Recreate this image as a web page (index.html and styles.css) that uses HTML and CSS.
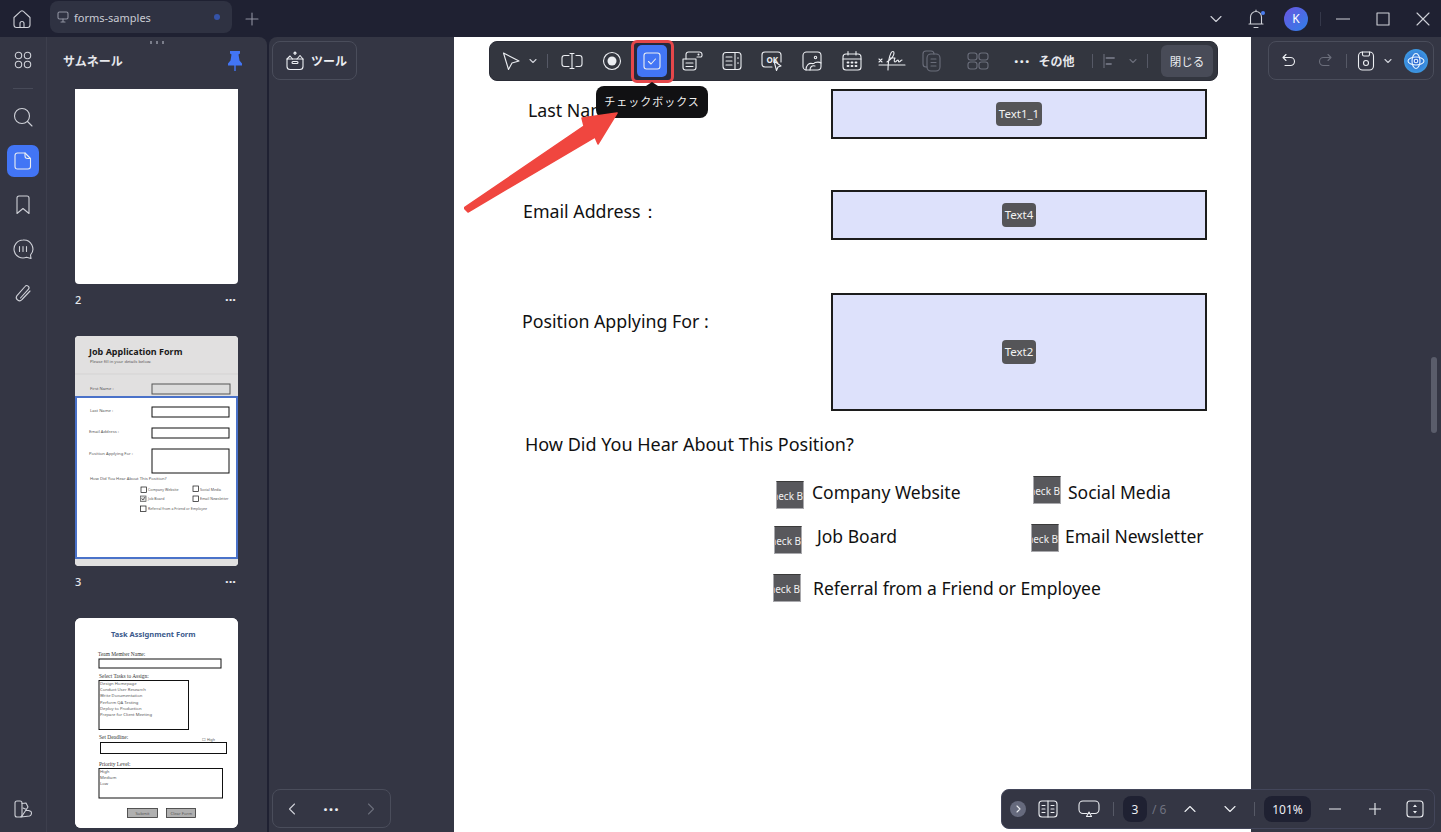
FILE: index.html
```html
<!DOCTYPE html>
<html lang="ja">
<head>
    <meta charset="UTF-8">
    <meta name="viewport" content="width=device-width, initial-scale=1.0">
    <title>forms-samples</title>
    <link rel="stylesheet" href="styles.css">
</head>
<body>
    <!-- Title bar -->
    <header class="titlebar">
        <div class="home-btn">
            <svg class="icon" width="20" height="20" viewBox="0 0 20 20"><path d="M2 8.5 8.6 2.4a2 2 0 0 1 2.8 0L18 8.5v7.5a2.5 2.5 0 0 1-2.5 2.5h-11A2.5 2.5 0 0 1 2 16Z"/><path d="M8 18.5v-4a2 2 0 0 1 4 0v4"/></svg>
        </div>
        <div class="tab">
            <svg class="icon dim" width="12" height="12" viewBox="0 0 12 12"><rect x="1" y="1" width="10" height="7" rx="1.5"/><path d="M6 8v2.5M4 11h4"/></svg>
            <span class="tab-name">forms-samples</span>
            <span class="tab-dot"></span>
        </div>
        <div class="tab-add">
            <svg class="icon dim" width="14" height="14" viewBox="0 0 14 14"><path d="M7 1v12M1 7h12"/></svg>
        </div>
        <div class="titlebar-right">
            <svg class="icon" width="12" height="12" viewBox="0 0 12 12"><path d="M1 3.5 6 8.5l5-5"/></svg>
            <div class="bell">
                <svg class="icon" width="18" height="20" viewBox="0 0 18 20"><path d="M2 15h14M3.5 15V8a5.5 5.5 0 0 1 11 0v7M7 18.5h4M9 1v1.5"/></svg>
                <span class="bell-dot"></span>
            </div>
            <div class="avatar">K</div>
            <span class="title-sep"></span>
            <div class="win-btn"><svg class="icon" width="14" height="14" viewBox="0 0 14 14"><path d="M0 7h14"/></svg></div>
            <div class="win-btn"><svg class="icon" width="14" height="14" viewBox="0 0 14 14"><rect x="1" y="1" width="12" height="12"/></svg></div>
            <div class="win-btn"><svg class="icon" width="14" height="14" viewBox="0 0 14 14"><path d="M1 1l12 12M13 1 1 13"/></svg></div>
        </div>
    </header>

    <main class="main">
        <!-- Left panel -->
        <aside class="left-panel">
            <nav class="rail">
                <div class="rail-item">
                    <svg class="icon" width="20" height="20" viewBox="0 0 20 20"><circle cx="5.5" cy="5.5" r="3.2"/><circle cx="14.5" cy="5.5" r="3.2"/><circle cx="5.5" cy="14.5" r="3.2"/><circle cx="14.5" cy="14.5" r="3.2"/></svg>
                </div>
                <span class="rail-sep"></span>
                <div class="rail-item">
                    <svg class="icon" width="20" height="20" viewBox="0 0 20 20"><circle cx="9" cy="9" r="7.5"/><path d="M14.5 14.5 19 19"/></svg>
                </div>
                <div class="rail-item">
                    <span class="rail-active">
                        <svg class="icon bright" width="18" height="20" viewBox="0 0 18 20"><path d="M3.5 2H11l5.5 5.5V15.5a2.5 2.5 0 0 1-2.5 2.5H3.5A2.5 2.5 0 0 1 1 15.5v-11A2.5 2.5 0 0 1 3.5 2Z"/><path d="M11 2v3a2.5 2.5 0 0 0 2.5 2.5h3"/></svg>
                    </span>
                </div>
                <div class="rail-item">
                    <svg class="icon" width="16" height="20" viewBox="0 0 16 20"><path d="M2 3a2 2 0 0 1 2-2h8a2 2 0 0 1 2 2v15.5l-6-5-6 5Z"/></svg>
                </div>
                <div class="rail-item">
                    <svg class="icon" width="22" height="22" viewBox="0 0 22 22"><path d="M11 2a9 9 0 1 0 3.5 17.3L19 20.5l-.5-3.5A9 9 0 0 0 11 2Z"/><path d="M7.5 8.5v5M11 8.5v5M14.5 8.5v5"/></svg>
                </div>
                <div class="rail-item">
                    <svg class="icon" width="20" height="20" viewBox="0 0 20 20"><path d="M17 8 9 16.5a3.2 3.2 0 0 1-5.2-3.7L12 3.5a2.2 2.2 0 0 1 3.5 2.7L7.5 15"/></svg>
                </div>
                <div class="rail-item rail-bottom">
                    <svg class="icon" width="20" height="20" viewBox="0 0 20 20"><rect x="2" y="2" width="7" height="16" rx="2"/><path d="M9 4.5 13 4l2 4-6 9M10 9l8 3.5a3 3 0 0 1-1.5 4.5L8 18"/></svg>
                </div>
            </nav>
            <section class="thumbs">
                <div class="grip"><i></i><i></i><i></i></div>
                <div class="thumbs-head">
                    <h2>サムネール</h2>
                    <svg width="16" height="20" viewBox="0 0 16 20"><path class="pin" d="M3 0h10v2.5l-1.500 1 1 6 2.500 3v2H8.700V20H7.300v-5.500H1v-2l2.500-3 1-6-1.500-1Z"/></svg>
                </div>
                <div class="thumb-list">
                    <div class="thumb thumb-blank"></div>
                    <div class="thumb-foot"><span>2</span><span class="dots">···</span></div>

                    <svg class="thumb thumb-job" viewBox="0 0 163 230">
                        <rect width="163" height="230" fill="#e1e0e0"/>
                        <path d="M0 38h163" stroke="#d4d3d3"/>
                        <text x="14" y="19" class="t-title">Job Application Form</text>
                        <text x="15" y="27" class="t-small">Please fill in your details below.</text>
                        <text x="15" y="54" class="t-small">First Name :</text>
                        <rect x="77" y="48" width="78" height="10" class="t-box grey"/>
                        <rect x="1" y="61" width="161" height="161" class="t-view"/>
                        <text x="15" y="76" class="t-small">Last Name :</text>
                        <rect x="77" y="71" width="77" height="10" class="t-box"/>
                        <text x="14" y="97" class="t-small">Email Address :</text>
                        <rect x="77" y="92" width="77" height="10" class="t-box"/>
                        <text x="14" y="119" class="t-small">Position Applying For :</text>
                        <rect x="77" y="113" width="77" height="24" class="t-box"/>
                        <text x="15" y="144" class="t-small">How Did You Hear About This Position?</text>
                        <rect x="66" y="151" width="5.5" height="5.5" class="t-box thin"/>
                        <text x="73" y="155" class="t-tiny">Company Website</text>
                        <rect x="118" y="150" width="5.5" height="5.5" class="t-box thin"/>
                        <text x="125" y="155" class="t-tiny">Social Media</text>
                        <rect x="65.5" y="160" width="5.5" height="5.5" class="t-box thin grey"/>
                        <path d="M66.5 162.5l1.5 1.5 2-3" stroke="#333" stroke-width=".7" fill="none"/>
                        <text x="73" y="164" class="t-tiny">Job Board</text>
                        <rect x="118" y="160" width="5.5" height="5.5" class="t-box thin"/>
                        <text x="125" y="164" class="t-tiny">Email Newsletter</text>
                        <rect x="65.5" y="170" width="5.5" height="5.5" class="t-box thin"/>
                        <text x="73" y="174" class="t-tiny">Referral from a Friend or Employee</text>
                    </svg>
                    <div class="thumb-foot"><span>3</span><span class="dots">···</span></div>

                    <svg class="thumb thumb-task" viewBox="0 0 163 210">
                        <rect width="163" height="210" fill="#fff"/>
                        <text x="36" y="19" class="t-blue">Task Assignment Form</text>
                        <text x="23" y="38" class="t-serif">Team Member Name:</text>
                        <rect x="24" y="41" width="122" height="9" class="t-box"/>
                        <text x="24" y="60" class="t-serif">Select Tasks to Assign:</text>
                        <rect x="24" y="62.5" width="89.5" height="49" class="t-box"/>
                        <text x="25" y="67" class="t-small">Design Homepage</text>
                        <text x="25" y="73" class="t-small">Conduct User Research</text>
                        <text x="25" y="79" class="t-small">Write Documentation</text>
                        <text x="25" y="85.5" class="t-small">Perform QA Testing</text>
                        <text x="25" y="91.5" class="t-small">Deploy to Production</text>
                        <text x="25" y="97.5" class="t-small">Prepare for Client Meeting</text>
                        <text x="24" y="121" class="t-serif">Set Deadline:</text>
                        <text x="127" y="122.5" class="t-tiny">☐ High</text>
                        <rect x="25.5" y="124.5" width="126" height="11" class="t-box"/>
                        <text x="24" y="148" class="t-serif">Priority Level:</text>
                        <rect x="24" y="150.5" width="123.5" height="29.5" class="t-box"/>
                        <text x="25" y="155" class="t-small">High</text>
                        <text x="25" y="161" class="t-small">Medium</text>
                        <text x="25" y="167" class="t-small">Low</text>
                        <rect x="52.5" y="190.5" width="30" height="9" class="t-btn"/>
                        <text x="60.5" y="197" class="t-small">Submit</text>
                        <rect x="91.5" y="190.5" width="29" height="9" class="t-btn"/>
                        <text x="95.5" y="197" class="t-small">Clear Form</text>
                    </svg>
                </div>
            </section>
        </aside>

        <!-- Viewer -->
        <section class="viewer">
            <div class="tool-col">
                <button class="tool-btn">
                    <svg class="icon bright" width="20" height="20" viewBox="0 0 20 20"><path d="M2 8h16v7.5a3 3 0 0 1-3 3H5a3 3 0 0 1-3-3Z"/><path d="M2 8l3-3 2.5 3M12 8l3-3.5L18 8"/><path d="M10 1l1.2 1.2L10 3.4 8.8 2.2Z"/><rect x="7" y="10.5" width="6" height="2" rx="1"/></svg>
                    ツール
                </button>
                <div class="page-nav">
                    <svg class="icon" width="10" height="12" viewBox="0 0 10 12"><path d="M7.5 1 2.5 6l5 5"/></svg>
                    <span class="dots">···</span>
                    <svg class="icon faint" width="10" height="12" viewBox="0 0 10 12"><path d="M2.5 1l5 5-5 5"/></svg>
                </div>
            </div>

            <div class="pdf-page">
                <div class="form-row first-row">
                    <span class="pdf-text label-last">Last Name</span>
                    <div class="field"><span class="badge">Text1_1</span></div>
                </div>
                <div class="form-row">
                    <span class="pdf-text label-email">Email Address：</span>
                    <div class="field"><span class="badge">Text4</span></div>
                </div>
                <div class="form-row">
                    <span class="pdf-text label-position">Position Applying For :</span>
                    <div class="field field-tall"><span class="badge">Text2</span></div>
                </div>
                <p class="pdf-text question">How Did You Hear About This Position?</p>
                <div class="check-row row-one">
                    <div class="check">
                        <span class="check-box drop-5">Check Box</span>
                        <span class="pdf-text check-text gap-8">Company Website</span>
                    </div>
                    <div class="check">
                        <span class="check-box">Check Box</span>
                        <span class="pdf-text check-text gap-7">Social Media</span>
                    </div>
                </div>
                <div class="check-row row-two">
                    <div class="check">
                        <span class="check-box drop-4">Check Box</span>
                        <span class="pdf-text check-text gap-15">Job Board</span>
                    </div>
                    <div class="check">
                        <span class="check-box drop-2">Check Box</span>
                        <span class="pdf-text check-text gap-6">Email Newsletter</span>
                    </div>
                </div>
                <div class="check-row row-three">
                    <div class="check">
                        <span class="check-box">Check Box</span>
                        <span class="pdf-text check-text gap-12">Referral from a Friend or Employee</span>
                    </div>
                </div>
            </div>

            <div class="right-col">
                <div class="history">
                    <svg class="icon bright" width="16" height="16" viewBox="0 0 16 16"><path d="M5 1.5 2 4.5l3 3M2 4.5h7.5a4 4 0 0 1 0 8H4"/></svg>
                    <svg class="icon faint redo" width="16" height="16" viewBox="0 0 16 16"><path d="M11 1.5l3 3-3 3M14 4.5H6.5a4 4 0 0 0 0 8H12"/></svg>
                    <span class="bar-sep"></span>
                    <svg class="icon bright save" width="18" height="20" viewBox="0 0 18 20"><rect x="1.5" y="1" width="15" height="18" rx="4"/><path d="M5.5 1v2.5a1.5 1.5 0 0 0 1.5 1.5h4a1.5 1.5 0 0 0 1.5-1.5V1"/><circle cx="9" cy="12" r="2.5"/></svg>
                    <svg class="icon chev" width="10" height="10" viewBox="0 0 10 10"><path d="M2 3.5 5 6.5l3-3"/></svg>
                    <span class="ai-btn">
                        <svg width="18" height="18" viewBox="0 0 18 18" fill="none" stroke="#e8f6ff" stroke-width="1.1"><ellipse cx="9" cy="9" rx="8" ry="4"/><ellipse cx="9" cy="9" rx="4" ry="7.5"/><circle cx="9" cy="9" r="1.8"/></svg>
                    </span>
                </div>
            </div>
        </section>
    </main>

    <!-- Form toolbar floating over the page -->
    <div class="form-toolbar">
        <span class="tb-pointer">
            <svg class="icon bright" width="20" height="20" viewBox="0 0 20 20"><path d="M2.5 2 18 10l-7 2-3.5 6.5Z"/></svg>
        </span>
        <span class="tb-chev"><svg class="icon" width="10" height="10" viewBox="0 0 10 10"><path d="M2 3.5 5 6.5l3-3"/></svg></span>
        <span class="bar-sep"></span>
        <span class="tb-item">
            <svg class="icon bright" width="24" height="24" viewBox="0 0 24 24"><path d="M9 6.5H4.5A2.5 2.5 0 0 0 2 9v6a2.5 2.5 0 0 0 2.5 2.5H9M16 6.5h3.5A2.5 2.5 0 0 1 22 9v6a2.5 2.5 0 0 1-2.5 2.5H16M10 4.5h4M12 4.5v15M10 19.5h4"/></svg>
        </span>
        <span class="tb-item">
            <svg class="icon bright" width="20" height="20" viewBox="0 0 20 20"><circle cx="10" cy="10" r="8.5"/><circle class="solid" cx="10" cy="10" r="4.5"/></svg>
        </span>
        <span class="tb-item tb-active">
            <span class="tb-active-fill">
                <svg class="icon bright" width="18" height="18" viewBox="0 0 18 18"><rect x="1" y="1" width="16" height="16" rx="2.5"/><path d="M5.5 9.5 8 12l4.5-5"/></svg>
            </span>
        </span>
        <span class="tb-item">
            <svg class="icon bright" width="22" height="22" viewBox="0 0 22 22"><path d="M16 7h3.5A1.5 1.5 0 0 0 21 5.5v-1A2.5 2.5 0 0 0 18.500 2h-11A2.500 2.500 0 0 0 5 4.500V9"/><path d="M2 9h13v8.5a2.500 2.500 0 0 1-2.500 2.500h-8A2.500 2.500 0 0 1 2 17.500ZM5 13h7M5 16.500h7"/><circle class="solid" cx="17.5" cy="4.5" r="1"/></svg>
        </span>
        <span class="tb-item">
            <svg class="icon bright" width="22" height="22" viewBox="0 0 22 22"><rect x="2" y="2.5" width="18" height="17" rx="3"/><path d="M14 2.5v17M5 7h6M5 11h6M5 15h6M16.5 8h1M16.5 13h1"/></svg>
        </span>
        <span class="tb-item">
            <svg class="icon bright" width="24" height="24" viewBox="0 0 24 24"><path d="M12 18H5a3 3 0 0 1-3-3V6a3 3 0 0 1 3-3h13a3 3 0 0 1 3 3v7"/><text x="6.5" y="13.5" class="svg-ok">OK</text><path d="M14 12l7 5-3 1-1.5 3.5Z"/></svg>
        </span>
        <span class="tb-item">
            <svg class="icon bright" width="22" height="22" viewBox="0 0 22 22"><rect x="2" y="2" width="18" height="18" rx="3.5"/><circle cx="14.5" cy="7.5" r="1.2"/><path d="M5 20c0-5 3-7 6-6.5 2 .5 3-1 3-1s4-1 6 .5M9 20c0-3 2-5 5-4"/></svg>
        </span>
        <span class="tb-item">
            <svg class="icon bright" width="22" height="22" viewBox="0 0 22 22"><rect x="2" y="4" width="18" height="16" rx="3"/><path d="M2 9h18M7 1.5V5M15 1.5V5"/><path class="fat" d="M6.5 12.5h1M10.5 12.5h1M14.5 12.5h1M6.5 16h1M10.5 16h1M14.5 16h1"/></svg>
        </span>
        <span class="tb-item">
            <svg class="icon bright" width="28" height="22" viewBox="0 0 28 22"><path d="M1 9l3 3M4 9l-3 3M1 15h26"/><path d="M9 12c3-2 7-6 7-9 0-2-2-2-3 0-1.5 3-3 11-3 17M12 8h5c-1 2-1 4 0 4s2-2 3-2 0 2 1 2 2-2 3-2"/></svg>
        </span>
        <span class="tb-item">
            <svg class="icon faint" width="20" height="22" viewBox="0 0 20 22"><path d="M5 17H4a3 3 0 0 1-3-3V4a3 3 0 0 1 3-3h5a3 3 0 0 1 3 3"/><rect x="5" y="4" width="13" height="17" rx="4"/><path d="M9 9h5M9 12.5h5M9 16h5"/></svg>
        </span>
        <span class="tb-grid">
            <svg class="icon faint" width="22" height="18" viewBox="0 0 22 18"><rect x="1" y="1" width="9" height="7" rx="2.5"/><rect x="12" y="1" width="9" height="7" rx="2.5"/><rect x="1" y="10" width="9" height="7" rx="2.5"/><rect x="12" y="10" width="9" height="7" rx="2.5"/></svg>
        </span>
        <span class="tb-more"><span class="dots">···</span><b>その他</b></span>
        <span class="bar-sep"></span>
        <span class="tb-align">
            <svg class="icon faint" width="14" height="14" viewBox="0 0 14 14"><path d="M1 0v14"/><path class="fat" d="M3.5 4H11M3.5 10H8"/></svg>
        </span>
        <span class="tb-chev"><svg class="icon faint" width="10" height="10" viewBox="0 0 10 10"><path d="M2 3.5 5 6.5l3-3"/></svg></span>
        <span class="bar-sep"></span>
        <button class="tb-close">閉じる</button>
    </div>

    <div class="tooltip">チェックボックス</div>

    <svg class="red-arrow" width="170" height="110" viewBox="0 0 170 110">
        <path d="M153 5 118 10 120 18 0 100 4 104 131 29 134 36Z" fill="#f0463f" stroke="#f0463f" stroke-width="1.5" stroke-linejoin="round"/>
    </svg>

    <span class="scrollbar"></span>

    <!-- Bottom page bar -->
    <div class="page-bar">
        <span class="collapse">
            <svg class="icon bright" width="8" height="8" viewBox="0 0 8 8"><path d="M3 1l3 3-3 3"/></svg>
        </span>
        <svg class="icon bright pb-book" width="20" height="18" viewBox="0 0 20 18"><rect x="1" y="1" width="18" height="16" rx="3"/><path d="M10 1v16M4 5.5h3M4 9h3M4 12.5h3M13 5.5h3M13 9h3M13 12.5h3"/></svg>
        <svg class="icon bright pb-slide" width="22" height="18" viewBox="0 0 22 18"><path d="M9 13.5H5a4 4 0 0 1-4-4V5a4 4 0 0 1 4-4h12a4 4 0 0 1 4 4v4.5a4 4 0 0 1-4 4h-4"/><path d="M11 12l2.5 4.5h-5Z"/></svg>
        <span class="bar-sep pb-sep-one"></span>
        <span class="num-box pb-page">3</span>
        <span class="page-total">/ 6</span>
        <svg class="icon bright pb-up" width="12" height="12" viewBox="0 0 12 12"><path d="M1 8.5 6 3.5l5 5"/></svg>
        <svg class="icon bright pb-down" width="12" height="12" viewBox="0 0 12 12"><path d="M1 3.5 6 8.5l5-5"/></svg>
        <span class="bar-sep pb-sep-two"></span>
        <span class="num-box pb-zoom">101%</span>
        <svg class="icon bright pb-minus" width="12" height="12" viewBox="0 0 12 12"><path d="M0 6h12"/></svg>
        <svg class="icon bright pb-plus" width="12" height="12" viewBox="0 0 12 12"><path d="M0 6h12M6 0v12"/></svg>
        <svg class="icon bright pb-fit" width="18" height="18" viewBox="0 0 18 18"><rect x="1" y="1" width="16" height="16" rx="3"/><path class="solid" d="M9 4.5l2 2.5H7ZM9 13.5l2-2.5H7Z"/></svg>
    </div>
</body>
</html>
```

FILE: styles.css
```css
* {
    box-sizing: border-box;
}
body {
    margin: 0;
    width: 1441px;
    height: 832px;
    overflow: hidden;
    position: relative;
    background-color: #1f2132;
    color: #e6e7ec;
    font-family: 'Noto Sans', 'Noto Sans CJK JP', sans-serif;
    font-size: 12px;
}

/* icons */
.icon {
    fill: none;
    stroke: #cfd1d8;
    stroke-width: 1.1;
    stroke-linecap: round;
    stroke-linejoin: round;
    flex: none;
}
.icon.bright {
    stroke: #eceef2;
}
.icon.dim {
    stroke: #8f92a0;
}
.icon.faint {
    stroke: #6b6e7b;
}
.icon .solid {
    fill: #eceef2;
    stroke: none;
}
.icon .fat {
    stroke-width: 1.8;
}
.svg-ok {
    fill: #eceef2;
    stroke: none;
    font-size: 8px;
    font-weight: 700;
}
.dots {
    font-weight: 700;
    font-size: 16px;
    line-height: 1;
    letter-spacing: 1px;
    color: #eceef2;
}

/* title bar */
.titlebar {
    height: 37px;
    display: flex;
    align-items: center;
}
.home-btn {
    width: 50px;
    padding-left: 12px;
    display: flex;
}
.tab {
    width: 182px;
    height: 32px;
    align-self: flex-start;
    margin-top: 1px;
    background-color: #2f3242;
    border-radius: 8px;
    display: flex;
    align-items: center;
    padding: 0 9px 0 7px;
    gap: 5px;
}
.tab-name {
    flex: 1;
    font-size: 11px;
    color: #c9cbd3;
}
.tab-dot {
    width: 6px;
    height: 6px;
    border-radius: 50%;
    background-color: #3553a8;
    margin-right: 3px;
}
.tab-add {
    width: 40px;
    display: flex;
    justify-content: center;
}
.titlebar-right {
    margin-left: auto;
    display: flex;
    align-items: center;
}
.bell {
    position: relative;
    display: flex;
    margin-left: 25px;
}
.bell-dot {
    position: absolute;
    top: 2px;
    right: 0;
    width: 4px;
    height: 4px;
    border-radius: 50%;
    background-color: #4a7df0;
}
.avatar {
    width: 24px;
    height: 24px;
    margin-left: 19px;
    border-radius: 50%;
    background: linear-gradient(135deg, #6a55e0, #2f80e8);
    display: flex;
    align-items: center;
    justify-content: center;
    font-size: 12px;
    color: #fff;
}
.title-sep {
    width: 1px;
    height: 14px;
    background-color: #35384a;
    margin: 0 2px 0 12px;
}
.win-btn {
    width: 40px;
    display: flex;
    justify-content: center;
}
.win-btn:last-child {
    width: 36px;
    margin-left: 2px;
}

/* main layout */
.main {
    height: 795px;
    display: flex;
}
.left-panel {
    width: 267px;
    height: 100%;
    display: flex;
    background-color: #343644;
    border-radius: 0 8px 0 0;
}
.rail {
    width: 47px;
    padding: 1px 1px 0 0;
    border-right: 1px solid #3d3f4d;
    display: flex;
    flex-direction: column;
    align-items: center;
}
.rail-item {
    height: 44px;
    width: 100%;
    flex: none;
    display: flex;
    align-items: center;
    justify-content: center;
}
.rail-sep {
    width: 20px;
    height: 1px;
    flex: none;
    margin: 6px 0;
    background-color: #474a58;
}
.rail-active {
    width: 32px;
    height: 32px;
    border-radius: 7px;
    background-color: #4275f5;
    display: flex;
    align-items: center;
    justify-content: center;
}
.rail-bottom {
    margin-top: auto;
    margin-bottom: 1px;
}

/* thumbnails */
.thumbs {
    flex: 1;
    min-width: 0;
    display: flex;
    flex-direction: column;
    overflow: hidden;
}
.grip {
    height: 7px;
    flex: none;
    display: flex;
    justify-content: center;
    align-items: flex-end;
    gap: 4px;
}
.grip i {
    width: 2px;
    height: 3px;
    background-color: #7b7e8b;
}
.thumbs-head {
    height: 45px;
    flex: none;
    display: flex;
    align-items: center;
    justify-content: space-between;
    padding: 0 24px 11px 16px;
}
.thumbs-head h2 {
    margin: 0;
    font-size: 12px;
    font-weight: 700;
    color: #e6e7ec;
}
.pin {
    fill: #4275f5;
}
.thumb-list {
    padding-left: 28px;
}
.thumb {
    display: block;
    width: 163px;
    background-color: #fff;
    font-family: 'Noto Sans', sans-serif;
}
.thumb-blank {
    height: 195px;
    border-radius: 0 0 4px 4px;
}
.thumb-job {
    height: 230px;
    border-radius: 4px;
}
.thumb-task {
    height: 210px;
    border-radius: 6px;
}
.thumb-foot {
    height: 52px;
    padding: 6px 2px 0 0;
    display: flex;
    justify-content: space-between;
    width: 163px;
    font-size: 11px;
    line-height: 20px;
    font-weight: 500;
}
.thumb-foot .dots {
    font-size: 13px;
    line-height: 18px;
    letter-spacing: 0;
}
.t-title {
    font-size: 9px;
    font-weight: 700;
    fill: #1a1a1a;
}
.t-blue {
    font-size: 7.5px;
    font-weight: 700;
    fill: #3a5a8c;
}
.t-small {
    font-size: 4.2px;
    fill: #555;
}
.t-tiny {
    font-size: 3.6px;
    fill: #555;
}
.t-serif {
    font-family: 'Liberation Serif', serif;
    font-size: 5.4px;
    fill: #333;
}
.t-box {
    fill: #fff;
    stroke: #111;
    stroke-width: 1;
}
.t-box.grey {
    fill: #dcdcdc;
    stroke: #555;
}
.t-box.thin {
    stroke-width: .7;
}
.t-btn {
    fill: #b0b0b0;
    stroke: #333;
    stroke-width: .8;
}
.t-view {
    fill: #fff;
    stroke: #4a72c9;
    stroke-width: 2;
}

/* viewer */
.viewer {
    flex: 1;
    min-width: 0;
    margin-left: 2px;
    display: flex;
    background-color: #343644;
    border-radius: 8px 0 0 0;
}
.tool-col {
    width: 185px;
    height: 100%;
    padding: 4px 3px;
    display: flex;
    flex-direction: column;
    justify-content: space-between;
    align-items: flex-start;
}
.tool-btn {
    width: 85px;
    height: 39px;
    background: none;
    border: 1px solid #4a4d5b;
    border-radius: 8px;
    color: #eceef2;
    font-family: inherit;
    font-size: 12px;
    font-weight: 700;
    display: flex;
    align-items: center;
    gap: 6px;
    padding: 0 0 0 12px;
}
.page-nav {
    width: 119px;
    height: 39px;
    border: 1px solid #4a4d5b;
    border-radius: 8px;
    display: flex;
    align-items: center;
    justify-content: space-between;
    padding: 0 14px;
}

/* pdf page */
.pdf-page {
    width: 797px;
    height: 100%;
    background-color: #fff;
    padding-top: 52px;
    color: #111;
}
.pdf-text {
    font-family: 'Noto Sans', sans-serif;
    font-size: 17.8px;
    line-height: 28px;
    white-space: nowrap;
    color: #111;
}
.check-text {
    font-size: 17.5px;
}
.form-row {
    display: grid;
    grid-template-columns: 377px 376px;
    margin-top: 51px;
    align-items: start;
}
.first-row {
    margin-top: 0;
}
.form-row + .form-row + .form-row {
    margin-top: 53px;
}
.label-last {
    padding: 7px 0 0 74px;
}
.label-email {
    padding: 7px 0 0 69px;
}
.label-position {
    padding: 14px 0 0 68px;
}
.field {
    height: 50px;
    background-color: #dde1fb;
    border: 2px solid #1c1c1c;
    display: flex;
    align-items: center;
    justify-content: center;
}
.field-tall {
    height: 118px;
}
.badge {
    height: 24px;
    padding: 0 3px;
    border-radius: 4px;
    background-color: #555558;
    color: #f2f2f2;
    font-size: 11.5px;
    line-height: 24px;
    font-family: 'Noto Sans', sans-serif;
}
.question {
    margin: 19px 0 18px 71px;
    font-size: 18px;
}
.check-row {
    display: grid;
    grid-template-columns: 257px 1fr;
}
.row-one {
    margin-left: 322px;
}
.row-two {
    margin-left: 320px;
    margin-top: 13px;
}
.row-three {
    margin-left: 319px;
    margin-top: 20px;
}
.check {
    display: flex;
    align-items: flex-start;
}
.check-box {
    width: 28px;
    height: 28px;
    flex: none;
    background-color: #58585c;
    border: 1px solid #a9a9ad;
    border-top-color: #3a3a3a;
    color: #f2f2f2;
    font-size: 10px;
    line-height: 28px;
    display: flex;
    justify-content: center;
    overflow: hidden;
    white-space: nowrap;
}
.drop-5 {
    margin-top: 5px;
}
.drop-4 {
    margin-top: 4px;
}
.drop-2 {
    margin-top: 2px;
}
.row-one .pdf-text {
    margin-top: 2px;
}
.gap-6 {
    margin-left: 6px;
}
.gap-7 {
    margin-left: 7px;
}
.gap-8 {
    margin-left: 8px;
}
.gap-12 {
    margin-left: 12px;
}
.gap-15 {
    margin-left: 15px;
}

/* right column */
.right-col {
    flex: 1;
    padding: 4px 0 0 17px;
}
.history {
    width: 166px;
    height: 39px;
    border: 1px solid #4a4d5b;
    border-radius: 8px;
    display: flex;
    align-items: center;
    padding-left: 12px;
}
.redo {
    margin-left: 20px;
}
.history .bar-sep {
    margin-left: 13px;
}
.save {
    margin-left: 10px;
}
.chev {
    margin-left: 8px;
}
.ai-btn {
    width: 24px;
    height: 24px;
    margin-left: 11px;
    border-radius: 50%;
    background: radial-gradient(circle, #2a5fd0, #45b0e8);
    display: flex;
    align-items: center;
    justify-content: center;
}
.bar-sep {
    width: 1px;
    height: 14px;
    flex: none;
    background-color: #565966;
}

/* floating form toolbar */
.form-toolbar {
    position: absolute;
    top: 41px;
    left: 489px;
    width: 729px;
    height: 40px;
    padding-left: 9px;
    background-color: #33363f;
    border: 1px solid #2a2c36;
    border-radius: 8px;
    display: flex;
    align-items: center;
}
.tb-pointer {
    width: 24px;
    display: flex;
    justify-content: center;
}
.tb-chev {
    width: 20px;
    display: flex;
    justify-content: center;
}
.form-toolbar > .bar-sep {
    margin: 0 4px;
}
.tb-item {
    width: 40px;
    height: 38px;
    flex: none;
    display: flex;
    align-items: center;
    justify-content: center;
}
.tb-active {
    position: relative;
}
.tb-active::before {
    content: "";
    position: absolute;
    top: -2px;
    left: -1px;
    right: -2px;
    bottom: -3px;
    border: 3px solid #e5474a;
    border-radius: 6px;
    background-color: #262a3c;
}
.tb-active-fill {
    position: relative;
    width: 30px;
    height: 32px;
    border-radius: 5px;
    background-color: #4275f5;
    display: flex;
    align-items: center;
    justify-content: center;
}
.tb-grid {
    width: 52px;
    flex: none;
    display: flex;
    justify-content: center;
}
.tb-more {
    width: 84px;
    flex: none;
    display: flex;
    align-items: center;
    gap: 8px;
    padding-left: 10px;
}
.tb-more b {
    font-size: 12px;
    font-weight: 700;
}
.tb-align {
    width: 26px;
    display: flex;
    justify-content: center;
}
.tb-close {
    width: 52px;
    height: 32px;
    margin-left: 9px;
    background-color: #484b57;
    border: none;
    border-radius: 6px;
    color: #eceef2;
    font-family: inherit;
    font-size: 11.5px;
    padding: 0;
}

.tooltip {
    position: absolute;
    top: 86px;
    left: 596px;
    width: 112px;
    height: 32px;
    background-color: #111113;
    border-radius: 8px;
    color: #f0f0f0;
    font-size: 11px;
    letter-spacing: 1px;
    line-height: 32px;
    text-align: center;
}
.tooltip::before {
    content: "";
    position: absolute;
    top: -4px;
    left: 50px;
    border-left: 6px solid transparent;
    border-right: 6px solid transparent;
    border-bottom: 4px solid #111113;
}
.red-arrow {
    position: absolute;
    top: 108px;
    left: 464px;
}
.scrollbar {
    position: absolute;
    top: 357px;
    left: 1431px;
    width: 6px;
    height: 76px;
    border-radius: 3px;
    background-color: #5a5d6b;
}

/* bottom page bar */
.page-bar {
    position: absolute;
    top: 789px;
    left: 1001px;
    width: 434px;
    height: 40px;
    background-color: #343644;
    border: 1px solid #43465a;
    border-radius: 8px;
    display: flex;
    align-items: center;
    padding-left: 8px;
}
.collapse {
    width: 16px;
    height: 16px;
    border-radius: 50%;
    background-color: #666a7d;
    display: flex;
    align-items: center;
    justify-content: center;
    flex: none;
}
.pb-book {
    margin-left: 12px;
}
.pb-slide {
    margin-left: 20px;
}
.pb-sep-one {
    margin-left: 13px;
}
.num-box {
    height: 26px;
    border-radius: 8px;
    background-color: #1f2132;
    display: flex;
    align-items: center;
    justify-content: center;
    flex: none;
    font-size: 12px;
    color: #eceef2;
}
.pb-page {
    width: 24px;
    margin-left: 9px;
}
.page-total {
    width: 16px;
    margin-left: 5px;
    color: #6f7280;
    font-size: 12px;
    flex: none;
}
.pb-up {
    margin-left: 16px;
}
.pb-down {
    margin-left: 28px;
}
.pb-sep-two {
    margin-left: 18px;
}
.pb-zoom {
    width: 47px;
    margin-left: 9px;
}
.pb-minus {
    margin-left: 18px;
}
.pb-plus {
    margin-left: 28px;
}
.pb-fit {
    margin-left: 25px;
}
```
